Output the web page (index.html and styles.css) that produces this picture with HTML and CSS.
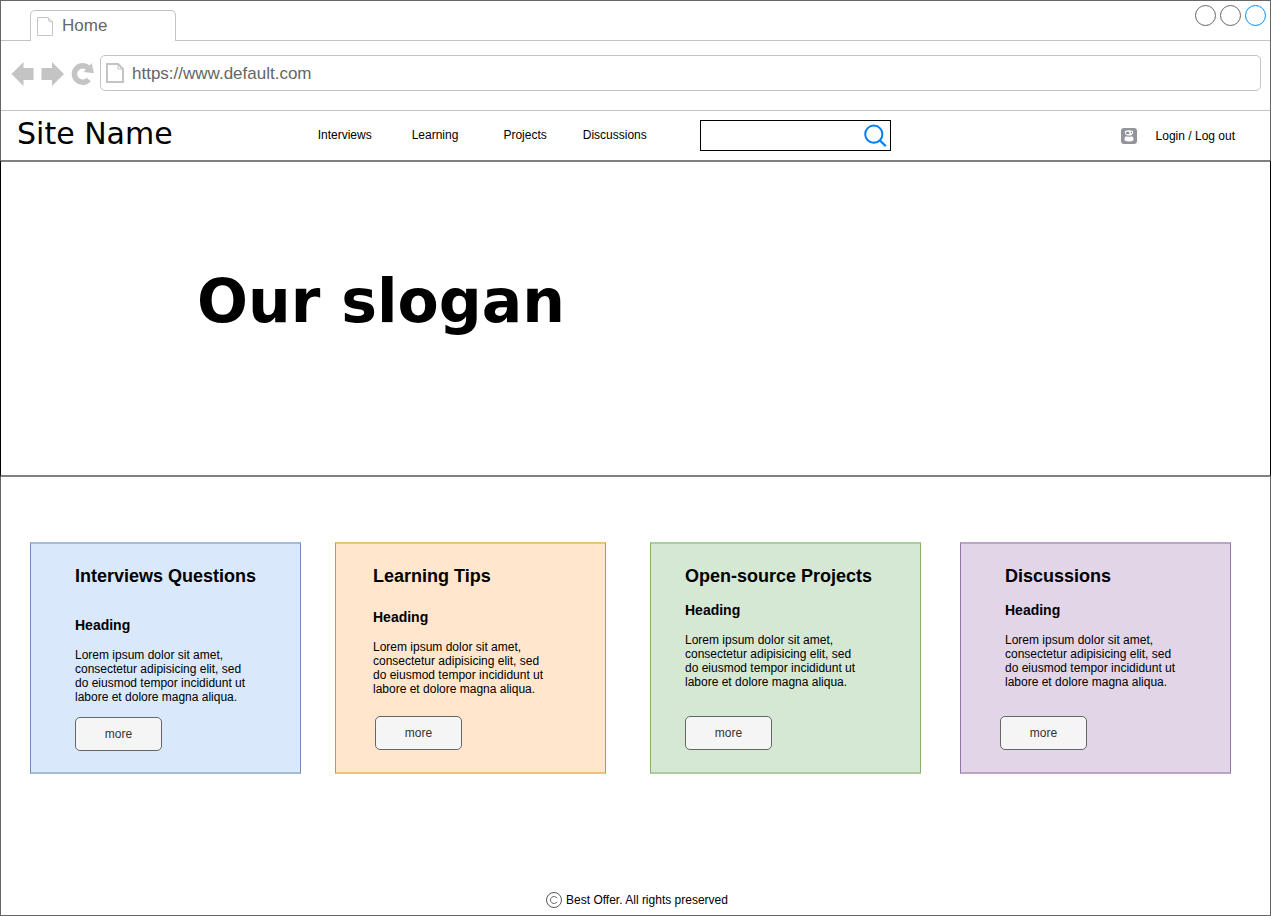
FILE: index.html
```html
<!DOCTYPE html>
<html lang="en">
<head>
<meta charset="utf-8">
<meta name="viewport" content="width=device-width, initial-scale=1">
<title>Home</title>
<link rel="stylesheet" href="styles.css">
</head>
<body>
<div class="window">
  <div class="tab-strip">
    <div class="tab">
      <svg class="tab-icon" width="16" height="20" viewBox="0 0 16 20" aria-hidden="true">
        <path d="M0.5 1.5H11L15.5 6V19.5H0.5ZM11 1.5L12 5L15.5 6" fill="none" stroke="#c4c4c4"/>
      </svg>
      <span>Home</span>
    </div>
    <div class="window-controls">
      <button class="control" type="button" aria-label="Minimize"></button>
      <button class="control" type="button" aria-label="Maximize"></button>
      <button class="control control-active" type="button" aria-label="Close"></button>
    </div>
  </div>

  <div class="toolbar">
    <button class="tool" type="button" aria-label="Back">
      <svg width="24" height="26" viewBox="0 0 24 26"><path d="M0.5 13L12.5 1V7H22.5V19H12.5V25Z" fill="#c4c4c4"/></svg>
    </button>
    <button class="tool" type="button" aria-label="Forward">
      <svg width="24" height="26" viewBox="0 0 24 26"><path d="M23 13L11 1V7H0.5V19H11V25Z" fill="#c4c4c4"/></svg>
    </button>
    <button class="tool" type="button" aria-label="Reload">
      <svg width="23" height="26" viewBox="0 0 23 26"><path d="M17.6 7.4A8.2 8.2 0 1 0 17.8 18.4" fill="none" stroke="#c4c4c4" stroke-width="5.4"/><path d="M20.8 2L22.8 12.2L12.6 11Z" fill="#c4c4c4"/></svg>
    </button>
    <label class="address">
      <svg width="18" height="20" viewBox="0 0 18 20" aria-hidden="true">
        <path d="M1 1H12L17 6V19H1Z" fill="none" stroke="#c4c4c4" stroke-width="2"/>
        <path d="M12 1V6H17" fill="none" stroke="#c4c4c4"/>
      </svg>
      <input class="address-input" type="text" value="https://www.default.com" aria-label="Address">
    </label>
  </div>

  <header class="site-header">
    <a class="brand" href="#">Site Name</a>
    <nav class="nav">
      <a class="nav-interviews" href="#interviews">Interviews</a>
      <a class="nav-learning" href="#learning">Learning</a>
      <a class="nav-projects" href="#projects">Projects</a>
      <a href="#discussions">Discussions</a>
    </nav>
    <form class="search">
      <input class="search-input" type="search" aria-label="Search">
      <button class="search-button" type="button" aria-label="Search">
        <svg width="24" height="24" viewBox="0 0 24 24"><circle cx="10.8" cy="10.2" r="8.6" fill="none" stroke="#0080f0" stroke-width="2"/><path d="M16.8 16.3L22.8 22.2" stroke="#0080f0" stroke-width="2.2"/></svg>
      </button>
    </form>
    <a class="account" href="#account">
      <svg width="16" height="16" viewBox="0 0 16 16" aria-hidden="true">
        <rect width="16" height="16" rx="3" fill="#93939b"/>
        <path d="M4 3Q8 1.4 12 3V5.4Q11 7.6 8 7.6T4 5.4Z" fill="#fff"/>
        <path d="M4.8 4.2L7 3.4L8.4 4.4V6L6 6.2L4.8 5.4ZM9.6 3.6L11 3.8V5L10 5.8Z" fill="#93939b"/>
        <path d="M3.6 12.6Q3 8.6 5.5 8.2Q8 9.3 10.5 8.2Q13 8.6 12.4 12.6Q8 14.6 3.6 12.6Z" fill="#fff"/>
      </svg>
      <span>Login / Log out</span>
    </a>
  </header>

  <main>
    <section class="hero">
      <h1 class="slogan">Our slogan</h1>
    </section>

    <section class="cards">
      <article class="card card-interviews" id="interviews">
        <h2 class="card-title">Interviews Questions</h2>
        <h3 class="card-heading">Heading</h3>
        <p class="card-text">Lorem ipsum dolor sit amet, consectetur adipisicing elit, sed do eiusmod tempor incididunt ut labore et dolore magna aliqua.</p>
        <button class="more" type="button">more</button>
      </article>
      <article class="card card-learning" id="learning">
        <h2 class="card-title">Learning Tips</h2>
        <h3 class="card-heading">Heading</h3>
        <p class="card-text">Lorem ipsum dolor sit amet, consectetur adipisicing elit, sed do eiusmod tempor incididunt ut labore et dolore magna aliqua.</p>
        <button class="more" type="button">more</button>
      </article>
      <article class="card card-projects" id="projects">
        <h2 class="card-title">Open-source Projects</h2>
        <h3 class="card-heading">Heading</h3>
        <p class="card-text">Lorem ipsum dolor sit amet, consectetur adipisicing elit, sed do eiusmod tempor incididunt ut labore et dolore magna aliqua.</p>
        <button class="more" type="button">more</button>
      </article>
      <article class="card card-discussions" id="discussions">
        <h2 class="card-title">Discussions</h2>
        <h3 class="card-heading">Heading</h3>
        <p class="card-text">Lorem ipsum dolor sit amet, consectetur adipisicing elit, sed do eiusmod tempor incididunt ut labore et dolore magna aliqua.</p>
        <button class="more" type="button">more</button>
      </article>
    </section>
  </main>

  <footer class="footer">
    <svg width="16" height="16" viewBox="0 0 16 16" aria-hidden="true">
      <circle cx="8" cy="8" r="7.5" fill="none" stroke="#555"/>
      <path d="M11 6.2A3.5 3.5 0 1 0 11 9.8" fill="none" stroke="#666"/>
    </svg>
    <span>Best Offer. All rights preserved</span>
  </footer>
</div>
</body>
</html>
```

FILE: styles.css
```css
*,
*::before,
*::after {
  box-sizing: border-box;
}

body {
  margin: 0;
  background: #fff;
  color: #000;
  font: 12px/14px "Liberation Sans", Arial, sans-serif;
}

a {
  color: inherit;
  text-decoration: none;
}

button,
input {
  margin: 0;
  padding: 0;
  border: 0;
  background: none;
  color: inherit;
  font: inherit;
}

svg {
  display: block;
  flex: none;
}

.window {
  display: flex;
  flex-direction: column;
  min-height: 100vh;
  border: 1px solid #666;
}

/* Browser chrome */
.tab-strip {
  display: flex;
  justify-content: space-between;
  align-items: flex-start;
  height: 40px;
  border-bottom: 1px solid #c4c4c4;
}

.tab {
  display: flex;
  align-items: center;
  gap: 9px;
  width: 146px;
  height: 31px;
  margin: 9px 0 0 29px;
  padding-left: 6px;
  border: 1px solid #c4c4c4;
  border-bottom: 0;
  border-radius: 5px 5px 0 0;
  background: #fff;
  color: #666;
  font-size: 17px;
  line-height: 20px;
}

.window-controls {
  display: flex;
  gap: 4px;
  padding: 4px 4px 0 0;
}

.control {
  width: 21px;
  height: 21px;
  border: 1px solid #666;
  border-radius: 50%;
}

.control-active {
  border-color: #008cff;
}

.toolbar {
  display: flex;
  align-items: center;
  gap: 6px;
  padding: 14px 9px 19px 10px;
  border-bottom: 1px solid #c4c4c4;
}

.tool {
  padding-top: 2px;
}

.address {
  display: flex;
  flex: 1;
  align-items: center;
  gap: 8px;
  height: 36px;
  padding-left: 5px;
  border: 1px solid #c4c4c4;
  border-radius: 5px;
}

.address-input {
  flex: 1;
  min-width: 0;
  padding-top: 1px;
  color: #666;
  font-size: 17px;
  line-height: 20px;
}

/* Site header */
.site-header {
  display: flex;
  align-items: center;
  min-height: 49px;
  padding: 0 35px 0 16px;
}

.brand {
  padding-bottom: 4px;
  font: 30px/36px "DejaVu Sans", Verdana, sans-serif;
  white-space: nowrap;
}

.nav {
  display: flex;
  margin-left: 145px;
  padding-bottom: 1px;
}

.nav-interviews {
  margin-right: 40px;
}

.nav-learning {
  margin-right: 45px;
}

.nav-projects {
  margin-right: 36px;
}

.search {
  display: flex;
  align-items: center;
  width: 191px;
  height: 31px;
  margin-left: 53px;
  padding-right: 3px;
  border: 1px solid #000;
}

.search-input {
  flex: 1;
  min-width: 0;
}

.account {
  display: flex;
  align-items: center;
  gap: 19px;
  margin-left: auto;
  white-space: nowrap;
}

/* Hero */
.hero {
  margin: 0 -1px;
  padding: 103px 40px 138px 196px;
  border: solid #000;
  border-width: 2px 1px;
  border-top-color: #808080;
  border-bottom-color: #808080;
}

.slogan {
  margin: 0;
  font: bold 60px/72px "DejaVu Sans", Verdana, sans-serif;
}

/* Cards */
.cards {
  display: flex;
  padding: 65px 39px 40px 29px;
}

.card {
  flex: 1 1 270px;
  min-height: 232px;
  border: solid;
  border-width: 2px 1px;
}

.card-title {
  margin: 0;
  padding-top: 21px;
  font-size: 18px;
  line-height: 22px;
  white-space: nowrap;
}

.card-heading {
  margin: 15px 0;
  font-size: 14px;
  line-height: 16px;
}

.card-text {
  max-width: 180px;
  margin: 0;
}

.more {
  width: 87px;
  height: 34px;
  margin-top: 27px;
  border: 1px solid #666;
  border-radius: 5px;
  background: #f5f5f5;
  color: #333;
}

.card-interviews {
  padding-left: 44px;
  border-color: #a4bbde #6c8ebf;
  background: #dae8fc;
}

.card-interviews .card-heading {
  margin-top: 30px;
}

.card-interviews .more {
  margin-top: 13px;
}

.card-learning {
  margin-left: 34px;
  padding-left: 37px;
  border-color: #ebc573 #d79b00;
  background: #ffe6cc;
}

.card-learning .card-heading {
  margin-top: 22px;
}

.card-learning .more {
  margin-top: 20px;
  margin-left: 2px;
}

.card-projects {
  margin-left: 44px;
  padding-left: 34px;
  border-color: #accd9f #82b366;
  background: #d5e8d4;
}

.card-discussions {
  margin-left: 39px;
  padding-left: 44px;
  border-color: #bca4c7 #9673a6;
  background: #e1d5e7;
}

.card-discussions .more {
  margin-left: -5px;
}

/* Footer */
.footer {
  display: flex;
  justify-content: center;
  align-items: center;
  gap: 4px;
  margin-top: auto;
  padding: 0 0 7px 3px;
}
```
